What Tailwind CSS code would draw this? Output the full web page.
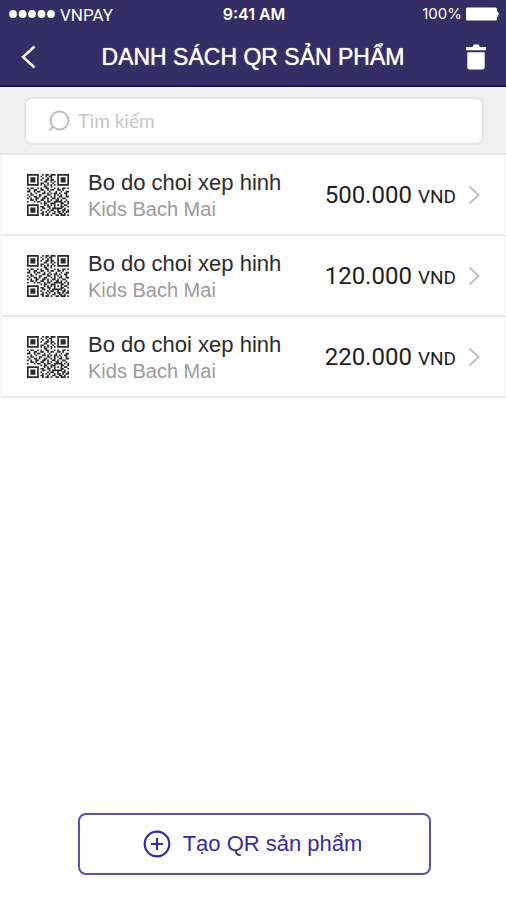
<!DOCTYPE html>
<html lang="vi">
<head>
<meta charset="utf-8">
<meta name="viewport" content="width=device-width, initial-scale=1">
<title>Danh sách QR sản phẩm</title>
<script src="https://cdn.jsdelivr.net/npm/@tailwindcss/browser@4"></script>
</head>
<body class="flex min-h-screen flex-col bg-[#fefefe] font-['Liberation_Sans',Arial,sans-serif] text-[#2c2c2c]">

<svg class="hidden" aria-hidden="true">
  <symbol id="qr" viewBox="0 0 25 25"><path id="qr-modules" fill="#2a2a2a"/></symbol>
</svg>

<header class="border-b-2 border-[#1c1358] bg-[#352e66] text-white">
  <div class="grid h-7 grid-cols-3 items-center pr-[6px] pl-2 font-[Inter,sans-serif] text-[15px] leading-5">
    <div class="flex items-center gap-1">
      <svg class="h-3 w-12" viewBox="0 0 48 12" fill="#fff" aria-hidden="true"><circle cx="5" cy="6" r="3.900"/><circle cx="14.600" cy="6" r="3.900"/><circle cx="24" cy="6" r="3.900"/><circle cx="33.500" cy="6" r="3.900"/><circle cx="43" cy="6" r="3.900"/></svg>
      <span class="pt-[2px] font-[Roboto,sans-serif] text-[17px]">VNPAY</span>
    </div>
    <div class="text-center text-[16px] font-semibold">9:41 AM</div>
    <div class="flex items-center justify-end gap-1">
      <span>100%</span>
      <svg class="h-4 w-[34px]" viewBox="0 0 34 16" fill="#fff" aria-hidden="true"><rect x="0" y="1.500" width="31" height="13" rx="1.500"/><path d="M31 5q3.500 3 0 6z"/></svg>
    </div>
  </div>
  <div class="flex h-[57px] items-center justify-between px-5">
    <button type="button" aria-label="Quay lại" class="flex w-5 justify-center">
      <svg class="h-6 w-5" viewBox="0 0 20 24" fill="none" stroke="#fff" stroke-width="2.400"><path d="M14.500 1.500 3 12l11.500 10.500"/></svg>
    </button>
    <h1 class="text-[23px] leading-7 [text-shadow:0_0_1px_#fff]">DANH SÁCH QR SẢN PHẨM</h1>
    <button type="button" aria-label="Xóa" class="flex w-5 justify-center">
      <svg class="h-[26px] w-5 shrink-0" viewBox="0 0 20 26" fill="#fff"><path d="M0 3h6.500L8 .5h4.500L14 3h6v3.300H0zM1.300 8.200h17.400V23a2.500 2.500 0 0 1-2.500 2.500H3.800A2.500 2.500 0 0 1 1.300 23z"/></svg>
    </button>
  </div>
</header>

<main class="flex flex-1 flex-col">
  <form class="border-b-2 border-[#e6e6e6] bg-[#f0f0f0] pt-[10px] pr-[22px] pb-2 pl-6">
    <label class="flex h-12 items-center gap-2 rounded-lg border-2 border-[#e6e6e6] bg-white px-[22px]">
      <svg class="h-[22px] w-[22px] shrink-0" viewBox="0 0 22 22" fill="none" stroke="#bdbdbd" stroke-width="2" aria-hidden="true"><circle cx="11.500" cy="10.500" r="9"/><path d="M5 17l-3.500 3.500"/></svg>
      <input type="search" aria-label="Tìm kiếm" placeholder="Tìm kiếm" class="min-w-0 flex-1 bg-transparent font-[Lato,sans-serif] text-[19px] leading-6 outline-none placeholder:text-[#c6c6c6]">
    </label>
  </form>

  <ul>
    <li class="border-x-2 border-b-2 border-x-[#f8f8f8] border-b-[#eaeaea]">
      <a href="#p1" class="flex h-[79px] items-center pr-6 pl-[25px]">
        <svg class="h-[42px] w-[42px] shrink-0" role="img" aria-label="Mã QR"><use href="#qr"/></svg>
        <span class="ml-[19px] flex min-w-0 flex-1 flex-col pt-[3px]">
          <span class="text-[22px] leading-[26px]">Bo do choi xep hinh</span>
          <span class="text-[20px] leading-[26px] text-[#9c9c9c]">Kids Bach Mai</span>
        </span>
        <span class="pt-[3px] font-[Roboto,sans-serif] text-[24px] leading-8 text-[#1e1e1e]">500.000 <span class="text-[19px]">VND</span></span>
        <svg class="ml-3 h-5 w-3 shrink-0" viewBox="0 0 12 20" fill="none" stroke="#c2c2c2" stroke-width="2" aria-hidden="true"><path d="M1.500 1.500 10.500 10l-9 8.500"/></svg>
      </a>
    </li>
    <li class="border-x-2 border-b-2 border-x-[#f8f8f8] border-b-[#eaeaea]">
      <a href="#p2" class="flex h-[79px] items-center pr-6 pl-[25px]">
        <svg class="h-[42px] w-[42px] shrink-0" role="img" aria-label="Mã QR"><use href="#qr"/></svg>
        <span class="ml-[19px] flex min-w-0 flex-1 flex-col pt-[3px]">
          <span class="text-[22px] leading-[26px]">Bo do choi xep hinh</span>
          <span class="text-[20px] leading-[26px] text-[#9c9c9c]">Kids Bach Mai</span>
        </span>
        <span class="pt-[3px] font-[Roboto,sans-serif] text-[24px] leading-8 text-[#1e1e1e]">120.000 <span class="text-[19px]">VND</span></span>
        <svg class="ml-3 h-5 w-3 shrink-0" viewBox="0 0 12 20" fill="none" stroke="#c2c2c2" stroke-width="2" aria-hidden="true"><path d="M1.500 1.500 10.500 10l-9 8.500"/></svg>
      </a>
    </li>
    <li class="border-x-2 border-b-2 border-x-[#f8f8f8] border-b-[#eaeaea]">
      <a href="#p3" class="flex h-[79px] items-center pr-6 pl-[25px]">
        <svg class="h-[42px] w-[42px] shrink-0" role="img" aria-label="Mã QR"><use href="#qr"/></svg>
        <span class="ml-[19px] flex min-w-0 flex-1 flex-col pt-[3px]">
          <span class="text-[22px] leading-[26px]">Bo do choi xep hinh</span>
          <span class="text-[20px] leading-[26px] text-[#9c9c9c]">Kids Bach Mai</span>
        </span>
        <span class="pt-[3px] font-[Roboto,sans-serif] text-[24px] leading-8 text-[#1e1e1e]">220.000 <span class="text-[19px]">VND</span></span>
        <svg class="ml-3 h-5 w-3 shrink-0" viewBox="0 0 12 20" fill="none" stroke="#c2c2c2" stroke-width="2" aria-hidden="true"><path d="M1.500 1.500 10.500 10l-9 8.500"/></svg>
      </a>
    </li>
  </ul>

  <div class="mt-auto pr-[75px] pb-[25px] pl-[78px]">
    <button type="button" class="flex h-[62px] w-full items-center justify-center gap-3 rounded-lg border-2 border-[#5e50ae] pr-1 text-[#3a2a9c]">
      <svg class="h-7 w-7 shrink-0" viewBox="0 0 28 28" fill="none" stroke="currentColor" stroke-width="2.200" aria-hidden="true"><circle cx="14" cy="14" r="12.300"/><path d="M14 8v12M8 14h12"/></svg>
      <span class="text-[22px] leading-7">Tạo QR sản phẩm</span>
    </button>
  </div>
</main>

<script>
  // One string per QR row, "#" marks a dark module.
  const rows = [
    '#######..#.##.###.#######',
    '#.....#.#..#.##...#.....#',
    '#.###.#..#..#.#...#.###.#',
    '#.###.#.#..##.##..#.###.#',
    '#.###.#...##..#.#.#.###.#',
    '#.....#.##..#..#..#.....#',
    '#######.#.#.#.#.#.#######',
    '..........##..#..........',
    '#.##..#.#..##...#.#..##.#',
    '.#..##..##..#.##..##.#...',
    '##..#.##..#..#...#..#..##',
    '..#..#...##.#.#.##.#..##.',
    '#.##...##...##..#.#.#..#.',
    '.#..##.#..##..#.#..##..##',
    '#.#..##..##.#..##.#..##..',
    '..##.#..##..#.#..##.#..#.',
    '#...#.##..#.##..#####.#.#',
    '........#.##..###...##..#',
    '#######...#.#.#.#.#.#.##.',
    '#.....#.##..##..#...##..#',
    '#.###.#..##..#.######.#..',
    '#.###.#.#...#.##..#..##.#',
    '#.###.#..#.#.#..#.##.#.##',
    '#.....#.##..#..##..##.#..',
    '#######..#.##.#..##.###.#'
  ];
  document.getElementById('qr-modules').setAttribute('d',
    rows.flatMap((row, y) => [...row].map((c, x) => c === '#' ? `M${x} ${y}h1v1h-1z` : '')).join(''));
</script>
</body>
</html>
